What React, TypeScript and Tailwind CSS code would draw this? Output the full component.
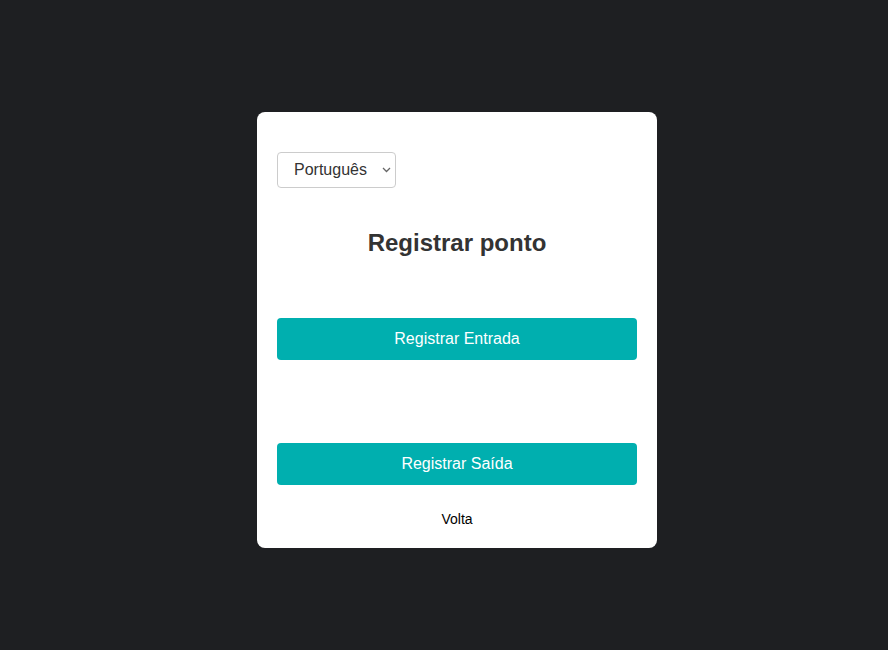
import React from "react";

export default function App() {
  return (
    <div className="min-h-[650px] w-full bg-[#1e1f22] pt-[112px] font-['Liberation_Sans',Arial,sans-serif]">
      <div className="ml-[257px] w-[400px] h-[436px] rounded-lg bg-white px-5 pt-10">
        {/* Language picker */}
        <div className="relative w-[119px]">
          <select
            defaultValue="pt"
            className="h-9 w-[119px] appearance-none rounded border border-[#cccccc] bg-white pl-4 pr-6 text-base text-[#333333]"
          >
            <option value="pt">Português</option>
            <option value="en">English</option>
            <option value="es">Español</option>
          </select>
          <svg
            className="pointer-events-none absolute right-[5px] top-[15px]"
            width="9"
            height="6"
            viewBox="0 0 9 6"
            fill="none"
          >
            <path d="M1 1l3.5 3.5L8 1" stroke="#666666" strokeWidth="1.3" />
          </svg>
        </div>

        <h2 className="mt-[43px] text-center text-2xl leading-6 font-bold text-[#333333]">
          Registrar ponto
        </h2>

        <button className="mt-[63px] h-[42px] w-full rounded bg-[#00afaf] text-base text-white">
          Registrar Entrada
        </button>

        <button className="mt-[83px] h-[42px] w-full rounded bg-[#00afaf] text-base text-white">
          Registrar Saída
        </button>

        <div className="mt-[26px] text-center text-sm leading-4 text-black">Volta</div>
      </div>
    </div>
  );
}
